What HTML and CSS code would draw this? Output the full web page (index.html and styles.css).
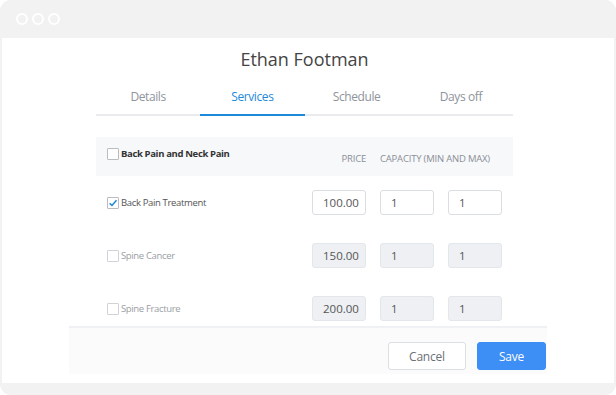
FILE: index.html
```html
<!DOCTYPE html>
<html>
<head>
<meta charset="utf-8">
<link rel="stylesheet" href="styles.css">
</head>
<body>
<div class="window">
  <div class="titlebar">
    <span class="dot"></span><span class="dot"></span><span class="dot"></span>
  </div>
  <div class="content">
    <div class="modal-body">
      <h1 class="title">Ethan Footman</h1>
      <div class="tabs">
        <div class="tab">Details</div>
        <div class="tab active">Services</div>
        <div class="tab">Schedule</div>
        <div class="tab">Days off</div>
      </div>
      <div class="list">
        <div class="head-row">
          <label class="check-label bold"><span class="box"></span>Back Pain and Neck Pain</label>
          <span class="col-price">PRICE</span>
          <span class="col-cap">CAPACITY (MIN AND MAX)</span>
        </div>
        <div class="row">
          <label class="check-label"><span class="box checked"><svg viewBox="0 0 12 12" width="10" height="10"><path d="M2 6.2 L4.8 9 L10.2 2.8" fill="none" stroke="#1a86d8" stroke-width="1.8"/></svg></span>Back Pain Treatment</label>
          <div class="inputs">
            <div class="field price">100.00</div>
            <div class="field">1</div>
            <div class="field">1</div>
          </div>
        </div>
        <div class="row disabled">
          <label class="check-label"><span class="box"></span>Spine Cancer</label>
          <div class="inputs">
            <div class="field price">150.00</div>
            <div class="field">1</div>
            <div class="field">1</div>
          </div>
        </div>
        <div class="row disabled">
          <label class="check-label"><span class="box"></span>Spine Fracture</label>
          <div class="inputs">
            <div class="field price">200.00</div>
            <div class="field">1</div>
            <div class="field">1</div>
          </div>
        </div>
      </div>
    </div>
    <div class="footer">
      <button class="btn cancel">Cancel</button>
      <button class="btn save">Save</button>
    </div>
  </div>
</div>
</body>
</html>
```
FILE: styles.css
```css
* { box-sizing: border-box; }
html, body { margin: 0; padding: 0; background: #ffffff; }
body { font-family: "Open Sans", "Noto Sans", sans-serif; }

.window {
  width: 616px;
  height: 395px;
  background: #f2f2f2;
  border-radius: 11px;
  display: flex;
  flex-direction: column;
  overflow: hidden;
}
.titlebar {
  height: 38px;
  display: flex;
  align-items: center;
  padding-left: 16px;
  gap: 4px;
}
.dot {
  width: 12px;
  height: 12px;
  border: 2px solid #ffffff;
  border-radius: 50%;
}
.content {
  margin: 0 2px;
  height: 345px;
  background: #ffffff;
  display: flex;
  flex-direction: column;
}
.modal-body {
  height: 288px;
  overflow: hidden;
  margin-left: 94px;
  width: 417px;
}
.title {
  margin: 0;
  padding-top: 8px;
  height: 48px;
  text-align: center;
  font-weight: 400;
  font-size: 18px;
  line-height: 26px;
  color: #444444;
}
.tabs {
  display: flex;
  border-bottom: 2px solid #e9ebee;
  height: 30px;
}
.tab {
  flex: 1;
  text-align: center;
  font-size: 12px;
  letter-spacing: -0.4px;
  line-height: 22px;
  color: #8e949b;
}
.tab.active {
  color: #1d8ad9;
  border-bottom: 2px solid #1d8ad9;
  margin-bottom: -2px;
}
.list { margin-top: 21px; }
.head-row {
  height: 39px;
  background: #f7f8fa;
  display: flex;
  align-items: center;
  padding: 0 11px;
}
.check-label {
  display: flex;
  align-items: center;
  gap: 2px;
  font-size: 9.5px;
  letter-spacing: -0.35px;
  color: #555555;
  flex: 1;
}
.check-label.bold {
  font-weight: 700;
  color: #333333;
  margin-top: -6px;
  align-items: flex-start;
}
.box {
  width: 12px;
  height: 12px;
  border: 1px solid #b9bdc2;
  border-radius: 1px;
  display: flex;
  align-items: center;
  justify-content: center;
  background: #ffffff;
}
.check-label.bold .box { margin-top: 1px; }
.col-price {
  font-size: 9.5px;
  letter-spacing: -0.2px;
  color: #8a8f96;
  margin-top: 4px;
}
.col-cap {
  font-size: 9.5px;
  letter-spacing: -0.2px;
  color: #8a8f96;
  margin-left: 14px;
  width: 122px;
  margin-top: 4px;
}
.row {
  height: 53px;
  display: flex;
  align-items: center;
  padding: 0 11px;
}
.inputs { display: flex; gap: 14px; }
.field {
  width: 54px;
  height: 25px;
  border: 1px solid #dadde2;
  border-radius: 3px;
  font-size: 11.5px;
  line-height: 23px;
  color: #555555;
  padding: 0 10px;
  background: #ffffff;
}
.field.price { text-align: right; padding-right: 7px; }
.row.disabled .field {
  background: #eef0f3;
  border-color: #e3e6ea;
}
.row.disabled .check-label { color: #9a9ea3; }
.row.disabled .box { border-color: #cfd2d6; }

.footer {
  margin-left: 67px;
  width: 478px;
  height: 48px;
  border-top: 2px solid #eff1f4;
  background: #fbfbfc;
  display: flex;
  justify-content: flex-end;
  align-items: flex-start;
  padding: 14px 1px 0 0;
  gap: 11px;
}
.btn {
  height: 28px;
  border-radius: 3px;
  font-family: inherit;
  font-size: 12px;
  letter-spacing: -0.2px;
  padding: 0;
  cursor: pointer;
}
.cancel {
  width: 78px;
  border: 1px solid #dcdfe4;
  background: #ffffff;
  color: #6b7076;
}
.save {
  width: 69px;
  border: 1px solid #3b8ef3;
  background: #3d8ef5;
  color: #ffffff;
}
```
